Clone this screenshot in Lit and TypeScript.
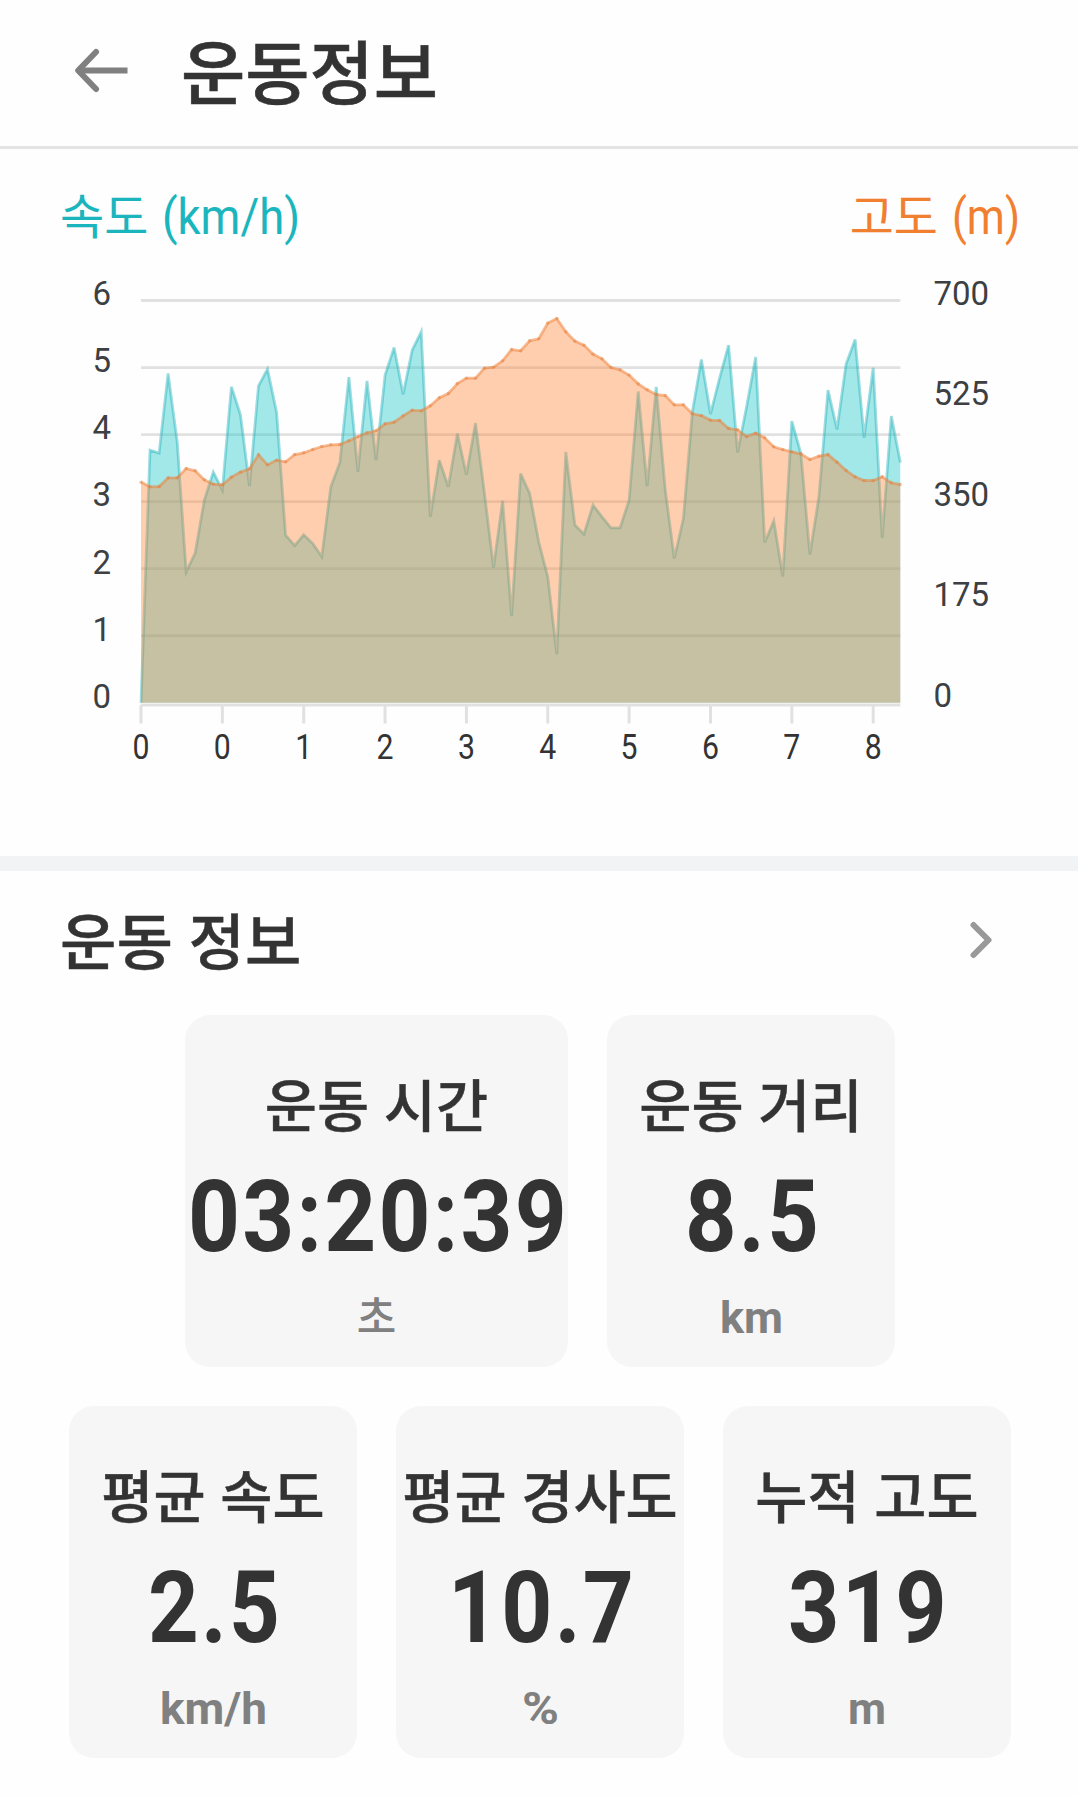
import { LitElement, html, svg, css } from "lit";
import { customElement, property } from "lit/decorators.js";

const X0 = 141;
const X1 = 900.3;
const TOP = 300.5;
const STEP = 67.05;
const BASE = TOP + STEP * 6;

// Heights above the baseline, in thirds of a pixel.
const SPEED = [
  0, 758, 749, 988, 783, 393, 450, 608, 692, 638, 948, 865, 650, 951, 1001, 871, 503, 472, 504, 478,
  439, 648, 721, 977, 693, 966, 728, 983, 1066, 925, 1058, 1113, 558, 728, 648, 808, 684, 839, 628, 406,
  606, 260, 688, 628, 483, 378, 146, 753, 533, 506, 593, 558, 525, 525, 608, 934, 650, 948, 638, 433,
  553, 873, 1030, 866, 973, 1073, 751, 888, 1037, 481, 546, 379, 845, 748, 445, 618, 938, 820, 1016, 1090,
  795, 1005, 495, 860, 721,
];
const ALTITUDE = [
  662, 648, 649, 675, 675, 703, 696, 669, 656, 654, 677, 692, 702, 744, 714, 728, 723, 745, 750, 760,
  769, 774, 775, 786, 798, 810, 816, 837, 842, 861, 878, 876, 891, 915, 928, 958, 974, 974, 1004, 1007,
  1026, 1060, 1056, 1086, 1092, 1139, 1153, 1113, 1085, 1073, 1046, 1032, 1006, 999, 983, 957, 939, 925, 922, 894,
  894, 867, 862, 848, 847, 823, 819, 799, 809, 795, 768, 760, 753, 747, 730, 740, 745, 722, 697, 678,
  667, 667, 678, 660, 655,
];

const px = (i: number) => X0 + ((X1 - X0) * i) / (SPEED.length - 1);
const line = (v: number[]) => v.map((h, i) => `${px(i).toFixed(1)},${(BASE - h / 3).toFixed(1)}`).join(" ");
const area = (v: number[]) => `${X0},${BASE} ${line(v)} ${X1},${BASE}`;

/** A single line of text whose glyphs are condensed or widened to a given width. */
@customElement("fit-text")
export class FitText extends LitElement {
  @property() text = "";
  @property({ type: Number }) width = 100;
  @property({ type: Number }) size = 40;
  @property({ type: Number }) spacing = 0;
  static styles = css`
    :host { display: block; flex: none; }
    .line { display: block; overflow: visible; }
    .glyphs { fill: currentColor; font-family: Roboto, "Liberation Sans", sans-serif; font-weight: inherit; }
  `;
  render() {
    return html`<svg class="line" width=${this.width} height=${this.size}>
      <text class="glyphs" x="0" y=${this.size} font-size=${this.size} letter-spacing=${this.spacing} textLength=${this.width}
        lengthAdjust="spacingAndGlyphs">${this.text}</text>
    </svg>`;
  }
}

@customElement("activity-chart")
export class ActivityChart extends LitElement {
  static styles = css`
    :host { display: block; }
    .legend { display: flex; justify-content: space-between; align-items: flex-end; box-sizing: border-box; height: 88px; padding: 0 58px 3px 60px; font-family: "Noto Sans CJK KR", sans-serif; font-size: 48px; }
    .name { display: flex; align-items: flex-end; gap: 14px; }
    .word { line-height: 60px; height: 51px; }
    .speed { color: #1bb5bd; }
    .alt { color: #f08030; }
    .plot { display: block; }
    .grid { stroke: #e1e1e1; stroke-width: 2.8; }
    .tick { stroke: #e1e1e1; stroke-width: 3; }
    .label { font: 33px Roboto, sans-serif; fill: #3c4043; }
    .xlabel { font: 35px Roboto, sans-serif; fill: #333; }
    .speed-area { fill: rgba(25, 200, 202, 0.4); }
    .speed-line { fill: none; stroke: rgba(20, 170, 180, 0.4); stroke-width: 2.8; }
    .alt-area { fill: rgba(255, 129, 47, 0.38); }
    .alt-line { fill: none; stroke: rgba(240, 125, 50, 0.5); stroke-width: 2.8; }
    .alt-dot { fill: rgba(225, 120, 55, 0.4); }
  `;
  render() {
    return html`
      <div class="legend">
        <div class="name speed"><span class="word">속도</span><fit-text text="(km/h)" width="138" size="50"></fit-text></div>
        <div class="name alt"><span class="word">고도</span><fit-text text="(m)" width="68" size="50"></fit-text></div>
      </div>
      <svg class="plot" width="1078" height="619" viewBox="0 237 1078 619">
        ${[0, 1, 2, 3, 4, 5].map((i) => svg`<line class="grid" x1=${X0} x2=${X1} y1=${TOP + STEP * i} y2=${TOP + STEP * i}></line>`)}
        <line class="grid" x1=${X0} x2=${X1} y1="705" y2="705"></line>
        ${[0, 1, 2, 3, 4, 5, 6, 7, 8, 9].map((i) => svg`<line class="tick" x1=${px(i * 9)} x2=${px(i * 9)} y1="705" y2="723.5"></line>`)}
        <polygon class="speed-area" points=${area(SPEED)}></polygon>
        <polyline class="speed-line" points=${line(SPEED)}></polyline>
        <polygon class="alt-area" points=${area(ALTITUDE)}></polygon>
        <polyline class="alt-line" points=${line(ALTITUDE)}></polyline>
        ${ALTITUDE.map((h, i) => svg`<circle class="alt-dot" cx=${px(i)} cy=${BASE - h / 3} r="1.7"></circle>`)}
        ${[6, 5, 4, 3, 2, 1, 0].map((n, i) => svg`<text class="label" text-anchor="middle" x="101.7" y=${TOP + 4.8 + STEP * i}>${n}</text>`)}
        ${[700, 525, 350, 175, 0].map((n, i) => svg`<text class="label" x="933.5" y=${TOP + 4.2 + STEP * 1.5 * i}>${n}</text>`)}
        ${[0, 0, 1, 2, 3, 4, 5, 6, 7, 8].map((n, i) => svg`<text class="xlabel" x=${px(i * 9) - 8.5} y="759" textLength="17" lengthAdjust="spacingAndGlyphs">${n}</text>`)}
      </svg>`;
  }
}

@customElement("stat-card")
export class StatCard extends LitElement {
  @property() label = "";
  @property() value = "";
  @property() unit = "";
  @property({ type: Number }) valueWidth = 100;
  @property({ type: Number }) unitWidth = 40;
  static styles = css`
    :host { display: flex; flex-direction: column; align-items: center; box-sizing: border-box; width: 288px; height: 352px; border-radius: 25px; background: #f6f6f6; color: #333; font-family: "Noto Sans CJK KR", sans-serif; }
    .label { margin-top: 47px; height: 89px; font-size: 56.7px; line-height: 80px; font-weight: 500; word-spacing: 2px; white-space: nowrap; -webkit-text-stroke: 0.4px currentColor; }
    .value { font-weight: 700; padding-left: 3px; }
    .unit { display: flex; align-items: flex-end; height: 82px; color: #808080; font-weight: 700; }
    .hangul { height: 41px; font-size: 43px; line-height: 45px; font-weight: 500; }
  `;
  render() {
    return html`
      <div class="label">${this.label}</div>
      <fit-text class="value" text=${this.value} width=${this.valueWidth} size="100" spacing="2.5"></fit-text>
      <div class="unit">
        ${this.unitWidth
          ? html`<fit-text text=${this.unit} width=${this.unitWidth} size="44"></fit-text>`
          : html`<span class="hangul">${this.unit}</span>`}
      </div>`;
  }
}

@customElement("app-root")
export class AppRoot extends LitElement {
  static styles = css`
    :host { display: block; width: 1078px; height: 1796px; overflow: hidden; background: #fefefe; color: #333; font-family: "Noto Sans CJK KR", sans-serif; }
    .header { display: flex; align-items: center; box-sizing: border-box; height: 149px; padding: 0 0 6px 72px; border-bottom: 3px solid #e4e4e4; }
    .back { flex: none; padding-top: 1px; }
    .title { margin: 0 0 0 49px; padding-bottom: 2px; font-size: 69.8px; line-height: 100px; font-weight: 500; -webkit-text-stroke: 0.6px currentColor; }
    .divider { height: 15px; background: #f1f3f4; }
    .section { display: flex; align-items: center; justify-content: space-between; height: 144px; box-sizing: border-box; padding: 0 83px 6px 60px; }
    .heading { margin: 0; padding-bottom: 2px; font-size: 61.3px; line-height: 90px; font-weight: 500; word-spacing: 2px; -webkit-text-stroke: 0.4px currentColor; }
    .cards { display: flex; flex-direction: column; align-items: center; gap: 39px; padding-left: 2px; }
    .row { display: flex; gap: 39px; }
    .wide { width: 383px; }
  `;
  render() {
    return html`
      <header class="header">
        <svg class="back" width="60" height="50" viewBox="0 0 60 50" fill="none" stroke="#808080" stroke-width="6" stroke-linecap="round" stroke-linejoin="round">
          <path d="M24 6L6.200 24.500L24 43"></path><path d="M7 24.500H55.500" stroke-linecap="butt"></path>
        </svg>
        <h1 class="title">운동정보</h1>
      </header>
      <activity-chart></activity-chart>
      <div class="divider"></div>
      <div class="section">
        <h2 class="heading">운동 정보</h2>
        <svg width="28" height="44" viewBox="0 0 28 44" fill="none" stroke="#999" stroke-width="6" stroke-linecap="round" stroke-linejoin="round">
          <path d="M6.500 7L21.500 22L6.500 37"></path>
        </svg>
      </div>
      <div class="cards">
        <div class="row">
          <stat-card class="wide" label="운동 시간" value="03:20:39" unit="초" .valueWidth=${381} .unitWidth=${0}></stat-card>
          <stat-card label="운동 거리" value="8.5" unit="km" .valueWidth=${136} .unitWidth=${63}></stat-card>
        </div>
        <div class="row">
          <stat-card label="평균 속도" value="2.5" unit="km/h" .valueWidth=${134} .unitWidth=${107}></stat-card>
          <stat-card label="평균 경사도" value="10.7" unit="%" .valueWidth=${188} .unitWidth=${37}></stat-card>
          <stat-card label="누적 고도" value="319" unit="m" .valueWidth=${161} .unitWidth=${38}></stat-card>
        </div>
      </div>`;
  }
}
